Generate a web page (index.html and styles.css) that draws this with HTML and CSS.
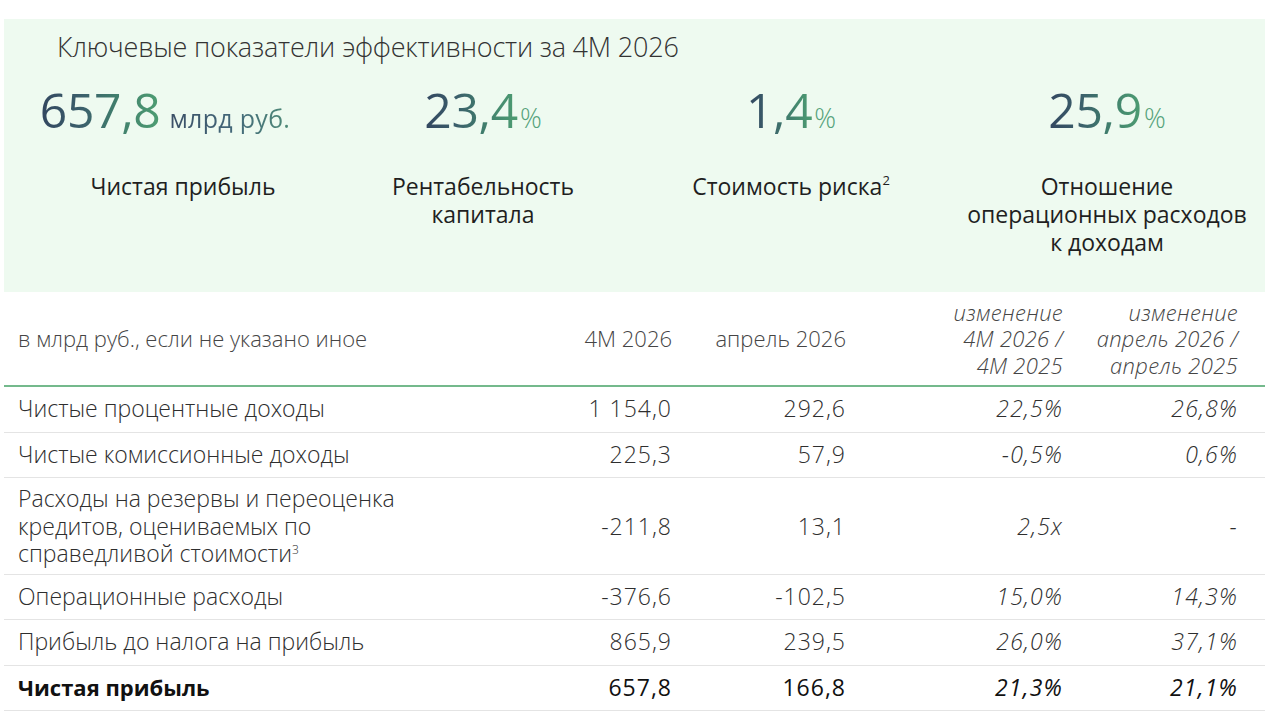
FILE: index.html
```html
<!DOCTYPE html>
<html lang="ru">
<head>
<meta charset="utf-8">
<title>Ключевые показатели эффективности за 4М 2026</title>
<link rel="stylesheet" href="styles.css">
</head>
<body>
<div class="page">
  <section class="kpi-panel">
    <h1 class="kpi-title">Ключевые показатели эффективности за 4М 2026</h1>
    <div class="kpi-grid">
      <div class="kpi">
        <div class="kpi-value kpi-value--shift"><span class="num">657,8</span><span class="unit">млрд руб.</span></div>
        <div class="kpi-label">Чистая прибыль</div>
      </div>
      <div class="kpi">
        <div class="kpi-value"><span class="num">23,4</span><span class="pct">%</span></div>
        <div class="kpi-label kpi-label--narrow">Рентабельность капитала</div>
      </div>
      <div class="kpi">
        <div class="kpi-value"><span class="num">1,4</span><span class="pct">%</span></div>
        <div class="kpi-label">Стоимость риска<sup>2</sup></div>
      </div>
      <div class="kpi">
        <div class="kpi-value"><span class="num">25,9</span><span class="pct">%</span></div>
        <div class="kpi-label kpi-label--wide">Отношение операционных расходов к доходам</div>
      </div>
    </div>
  </section>

  <table class="results">
    <colgroup>
      <col class="c-label">
      <col class="c-ytd">
      <col class="c-month">
      <col class="c-chg1">
      <col class="c-chg2">
    </colgroup>
    <thead>
      <tr>
        <th class="th-label">в млрд руб., если не указано иное</th>
        <th>4М 2026</th>
        <th>апрель 2026</th>
        <th class="th-chg th-chg1">изменение 4М&nbsp;2026&nbsp;/ 4М&nbsp;2025</th>
        <th class="th-chg th-chg2 th-last">изменение апрель&nbsp;2026&nbsp;/ апрель&nbsp;2025</th>
      </tr>
    </thead>
    <tbody>
      <tr>
        <td class="label">Чистые процентные доходы</td>
        <td>1&nbsp;154,0</td>
        <td>292,6</td>
        <td class="chg">22,5%</td>
        <td class="chg last">26,8%</td>
      </tr>
      <tr>
        <td class="label">Чистые комиссионные доходы</td>
        <td>225,3</td>
        <td>57,9</td>
        <td class="chg">-0,5%</td>
        <td class="chg last">0,6%</td>
      </tr>
      <tr class="row-multi">
        <td class="label label-wrap">Расходы на резервы и переоценка кредитов, оцениваемых по справедливой стоимости<sup>3</sup></td>
        <td>-211,8</td>
        <td>13,1</td>
        <td class="chg">2,5x</td>
        <td class="chg last">-</td>
      </tr>
      <tr>
        <td class="label">Операционные расходы</td>
        <td>-376,6</td>
        <td>-102,5</td>
        <td class="chg">15,0%</td>
        <td class="chg last">14,3%</td>
      </tr>
      <tr>
        <td class="label">Прибыль до налога на прибыль</td>
        <td>865,9</td>
        <td>239,5</td>
        <td class="chg">26,0%</td>
        <td class="chg last">37,1%</td>
      </tr>
      <tr class="row-total">
        <td class="label">Чистая прибыль</td>
        <td>657,8</td>
        <td>166,8</td>
        <td class="chg">21,3%</td>
        <td class="chg last">21,1%</td>
      </tr>
    </tbody>
  </table>
</div>
</body>
</html>
```

FILE: styles.css
```css
* { box-sizing: border-box; }

html, body {
  margin: 0;
  padding: 0;
  background: #ffffff;
}

body {
  font-family: "Open Sans", "Noto Sans", "DejaVu Sans", sans-serif;
  color: #2b2b2b;
}

.page {
  width: 1280px;
  padding: 19px 15px 0 4px;
}

/* ---------- KPI panel ---------- */
.kpi-panel {
  background: #eefaf0;
  height: 273px;
  padding: 11px 0 0 0;
}

.kpi-title {
  margin: 0 0 0 53px;
  font-size: 27px;
  line-height: 34px;
  font-weight: 300;
  color: #333333;
  letter-spacing: -0.2px;
}

.kpi-grid {
  display: grid;
  grid-template-columns: 300px 300px 316px 316px;
  padding-left: 29px;
  margin-top: 18px;
}

.kpi {
  display: flex;
  flex-direction: column;
  align-items: center;
}

.kpi-value {
  display: flex;
  align-items: baseline;
  height: 56px;
  line-height: 56px;
  white-space: nowrap;
}

.kpi-value--shift {
  margin-right: 36px;
}

.num {
  font-size: 48px;
  font-weight: 400;
  letter-spacing: -0.3px;
  background: linear-gradient(90deg, #32465f 0%, #3b5f6b 35%, #3f7a6c 60%, #4d9d72 100%);
  -webkit-background-clip: text;
  background-clip: text;
  color: transparent;
}

.unit {
  margin-left: 9px;
  font-size: 25px;
  font-weight: 400;
  letter-spacing: 0.3px;
  background: linear-gradient(90deg, #3a4e66 0%, #44697a 55%, #4f8b78 100%);
  -webkit-background-clip: text;
  background-clip: text;
  color: transparent;
}

.pct {
  margin-left: 2px;
  font-size: 27px;
  font-weight: 300;
  color: #55a27b;
}

.kpi-label {
  margin-top: 34px;
  font-size: 23px;
  line-height: 28px;
  font-weight: 400;
  color: #1f1f1f;
  text-align: center;
  white-space: nowrap;
}

.kpi-label--narrow {
  white-space: normal;
  width: 200px;
}

.kpi-label--wide {
  white-space: normal;
  width: 290px;
}

.kpi-label sup {
  font-size: 13px;
  line-height: 0;
  vertical-align: 10px;
}

/* ---------- Table ---------- */
.results {
  width: 1261px;
  border-collapse: collapse;
  table-layout: fixed;
}

.c-label { width: 556px; }
.c-ytd   { width: 112px; }
.c-month { width: 174px; }
.c-chg1  { width: 217px; }
.c-chg2  { width: 202px; }

.results th {
  height: 94px;
  padding: 0;
  font-size: 22px;
  line-height: 26.5px;
  font-weight: 300;
  color: #454545;
  text-align: right;
  vertical-align: middle;
  border-bottom: 2px solid #74b98c;
}

.results th.th-label {
  text-align: left;
  padding-left: 14px;
}

.results th.th-chg {
  font-style: italic;
  letter-spacing: 0.3px;
}

.results th.th-chg1 {
  padding-left: 97px;
}

.results th.th-chg2 {
  padding-left: 22px;
}

.results th.th-last,
.results td.last {
  padding-right: 27px;
}

.results td {
  padding: 8px 0 9px 0;
  font-size: 23px;
  line-height: 27.5px;
  font-weight: 300;
  color: #2e2e2e;
  text-align: right;
  vertical-align: middle;
  border-bottom: 1px solid #e4e4e4;
  white-space: nowrap;
  letter-spacing: 1px;
}

.results td.label {
  text-align: left;
  padding-left: 14px;
  letter-spacing: 0;
}

.results td.label-wrap {
  white-space: normal;
  padding-right: 158px;
}

.results td.chg {
  font-style: italic;
  letter-spacing: 1.2px;
}

.results td sup {
  font-size: 12px;
  line-height: 0;
  vertical-align: 8px;
}

.row-multi td {
  padding-top: 7px;
  padding-bottom: 6px;
}

.row-total td {
  color: #111111;
  font-weight: 400;
}

.row-total td.label {
  font-size: 22px;
  font-weight: 700;
}
```
